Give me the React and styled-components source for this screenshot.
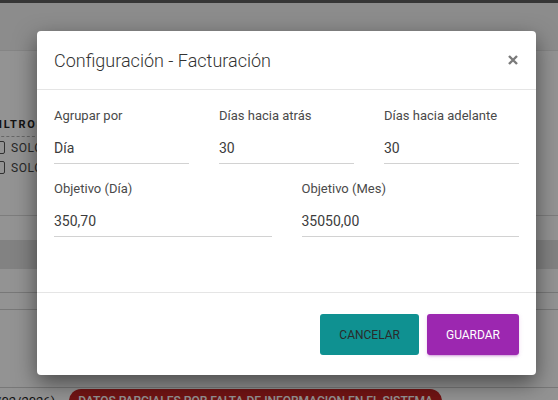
import React from 'react';
import styled, { createGlobalStyle } from 'styled-components';

const GlobalStyle = createGlobalStyle`
  html, body {
    margin: 0;
    padding: 0;
    overflow: hidden;
  }
  body {
    font-family: Roboto, "Noto Sans", Arial, sans-serif;
    background: #fff;
  }
  * {
    box-sizing: border-box;
  }
`;

const Colors = {
  TEAL: '#0f9191',
  PURPLE: '#9c27b0',
  LINE: '#d2d2d2',
  DIVIDER: '#e5e5e5',
  TEXT: '#3c3c3c',
  LABEL: '#4a4a4a',
};

export default function App() {
  return (
    <Page>
      <GlobalStyle />
      <TopStrip />
      <PageHeader />
      <Filters>
        <FilterTitle>FILTROS</FilterTitle>
        <CheckRow>
          <CheckBox />
          <span>SOLO PENDIENTES</span>
        </CheckRow>
        <CheckRow>
          <CheckBox />
          <span>SOLO ACTIVOS</span>
        </CheckRow>
      </Filters>
      <TableHead />
      <TableRow height={24} />
      <TableRow height={17} />
      <TableRow height={78} />
      <StatusRow>
        <DateText>(01/02/2026)</DateText>
        <Badge>DATOS PARCIALES POR FALTA DE INFORMACION EN EL SISTEMA</Badge>
      </StatusRow>

      <Backdrop>
        <Modal>
          <ModalHeader>
            <Title>Configuración - Facturación</Title>
            <CloseButton aria-label="Cerrar">
              <svg width="10" height="10" viewBox="0 0 10 10">
                <path d="M1 1 L9 9 M9 1 L1 9" stroke="#7a7a7a" strokeWidth="2.4" strokeLinecap="butt" />
              </svg>
            </CloseButton>
          </ModalHeader>
          <ModalBody>
            <FieldRow cols={3}>
              <Field label="Agrupar por" value="Día" />
              <Field label="Días hacia atrás" value="30" />
              <Field label="Días hacia adelante" value="30" />
            </FieldRow>
            <FieldRow cols={2}>
              <Field label="Objetivo (Día)" value="350,70" />
              <Field label="Objetivo (Mes)" value="35050,00" />
            </FieldRow>
          </ModalBody>
          <ModalFooter>
            <Button variant="teal">Cancelar</Button>
            <Button variant="purple">Guardar</Button>
          </ModalFooter>
        </Modal>
      </Backdrop>
    </Page>
  );
}

const Field = ({ label, value }) => (
  <FormGroup>
    <Label>{label}</Label>
    <Input>{value}</Input>
  </FormGroup>
);

const Page = styled.div`
  position: relative;
  width: 558px;
  height: 400px;
  overflow: hidden;
  background: #fdfdfd;
  font-family: Roboto, sans-serif;
`;

const TopStrip = styled.div`
  height: 3px;
  background: #5e5e5e;
`;

const PageHeader = styled.div`
  height: 48px;
  background: #f2f2f2;
  border-bottom: 1px solid #e6e6e6;
`;

const Filters = styled.div`
  height: 165px;
  padding-top: 66px;
  margin-left: -9px;
  border-bottom: 1px solid #d8d8d8;
`;

const FilterTitle = styled.div`
  font-size: 11px;
  font-weight: 700;
  letter-spacing: 1.7px;
  color: #222;
  line-height: 16px;
  padding-bottom: 3px;
  width: 90px;
  border-bottom: 1px dashed #b0b0b0;
`;

const CheckRow = styled.div`
  display: flex;
  align-items: center;
  gap: 6px;
  height: 19px;
  margin-top: 1px;
  font-size: 12px;
  letter-spacing: 0.6px;
  color: #444;
  padding-left: 1px;
  &:first-of-type {
    margin-top: 9px;
  }
`;

const CheckBox = styled.span`
  width: 13px;
  height: 13px;
  border: 1px solid #555;
  border-radius: 2px;
`;

const TableHead = styled.div`
  margin-top: 24px;
  height: 29px;
  background: #e0e0e0;
`;

const TableRow = styled.div`
  height: ${(p) => p.height}px;
  border-bottom: 1px solid #cfcfcf;
`;

const StatusRow = styled.div`
  display: flex;
  align-items: flex-start;
  gap: 14px;
  margin-left: -23px;
  padding-top: 1px;
`;

const DateText = styled.span`
  font-size: 13px;
  color: #222;
  line-height: 20px;
  padding-top: 3px;
`;

const Badge = styled.span`
  background: #c42424;
  color: #fff;
  font-size: 12px;
  font-weight: 500;
  line-height: 16px;
  padding: 4px 9px;
  border-radius: 12px;
  white-space: nowrap;
`;

const Backdrop = styled.div`
  position: absolute;
  inset: 0;
  background: rgba(0, 0, 0, 0.42);
  padding: 31px 0 0 37px;
`;

const Modal = styled.div`
  width: 499px;
  background: #fff;
  border-radius: 4px;
  box-shadow: 0 8px 22px rgba(0, 0, 0, 0.5);
  overflow: hidden;
`;

const ModalHeader = styled.div`
  display: flex;
  align-items: center;
  justify-content: space-between;
  height: 59px;
  padding: 1px 18px 0 17px;
  border-bottom: 1px solid ${Colors.DIVIDER};
`;

const Title = styled.h4`
  margin: 0;
  font-size: 18px;
  font-weight: 300;
  line-height: 24px;
  color: #333;
`;

const CloseButton = styled.button`
  display: flex;
  align-items: center;
  justify-content: center;
  border: none;
  background: none;
  padding: 0;
  width: 10px;
  height: 10px;
  margin-top: -2px;
  cursor: pointer;
`;

const ModalBody = styled.div`
  padding: 17px 17px 55px;
  border-bottom: 1px solid ${Colors.DIVIDER};
`;

const FieldRow = styled.div`
  display: grid;
  grid-template-columns: repeat(${(p) => p.cols}, 1fr);
  column-gap: 30px;
  & + & {
    margin-top: 16px;
  }
`;

const FormGroup = styled.div`
  display: flex;
  flex-direction: column;
`;

const Label = styled.label`
  font-size: 13px;
  line-height: 18px;
  color: ${Colors.LABEL};
  margin-bottom: 4px;
`;

const Input = styled.div`
  height: 35px;
  padding-top: 3px;
  display: flex;
  align-items: center;
  font-size: 14px;
  color: ${Colors.TEXT};
  border-bottom: 1px solid ${Colors.LINE};
`;

const ModalFooter = styled.div`
  display: flex;
  justify-content: flex-end;
  gap: 8px;
  padding: 21px 17px 20px;
`;

const Button = styled.button`
  height: 41px;
  padding: 0 19px;
  border: none;
  border-radius: 3px;
  font-family: Roboto, sans-serif;
  font-size: 12px;
  font-weight: 400;
  text-transform: uppercase;
  cursor: pointer;
  background: ${(p) => (p.variant === 'purple' ? Colors.PURPLE : Colors.TEAL)};
  color: ${(p) => (p.variant === 'purple' ? '#fff' : '#2b2b2b')};
  box-shadow: ${(p) =>
    p.variant === 'purple'
      ? '0 2px 2px 0 rgba(156,39,176,0.14), 0 3px 1px -2px rgba(156,39,176,0.2), 0 1px 5px 0 rgba(156,39,176,0.12)'
      : 'none'};
`;
